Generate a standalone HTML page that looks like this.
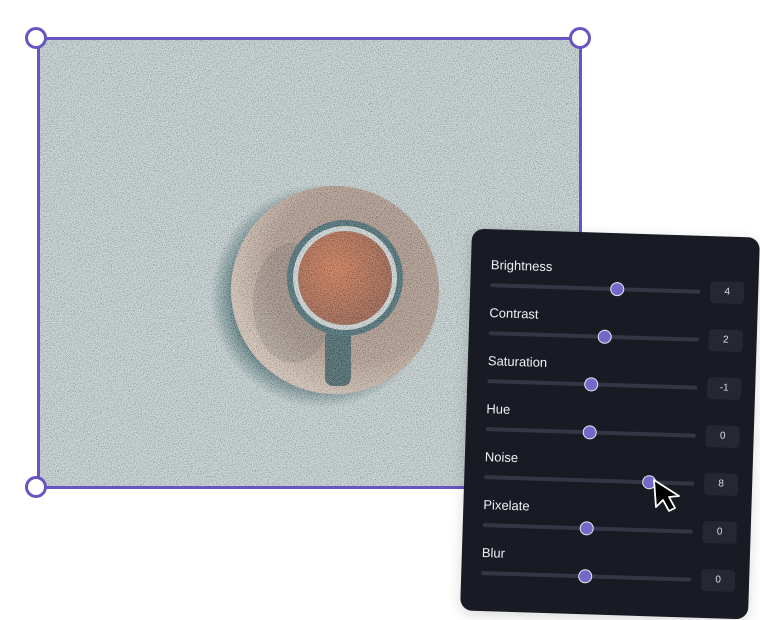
<!DOCTYPE html>
<html><head><meta charset="utf-8"><style>
*{margin:0;padding:0;box-sizing:border-box}
body{width:760px;height:620px;background:#fff;position:relative;overflow:hidden;font-family:"Liberation Sans",sans-serif}
.img{position:absolute;left:38px;top:38px;width:542px;height:449px;background:#bdcccc;overflow:hidden}
.frame{position:absolute;left:37px;top:37px;width:545px;height:452px;border:3px solid #6556c2}
.h{position:absolute;width:22px;height:22px;border-radius:50%;background:#fff;border:3px solid #6556c2}
.panel{position:absolute;left:466px;top:233px;width:288px;height:382px;background:#181b24;border-radius:12px;transform:rotate(1.8deg);box-shadow:0 4px 14px rgba(0,0,0,.15)}
.row{position:absolute;left:20px;width:252px;height:48px}
.lbl{position:absolute;left:0;top:0;color:#eef0f4;font-size:13px}
.trk{position:absolute;left:0;top:26px;width:210px;height:4px;border-radius:2px;background:#333745}
.knob{position:absolute;top:21px;width:14px;height:14px;border-radius:50%;background:#7468c8;border:1.5px solid #e8e8f4}
.val{position:absolute;left:220px;top:17px;width:34px;height:22px;border-radius:4px;background:#252833;color:#d8dae0;font-size:10px;text-align:center;line-height:22px}
</style></head><body>
<div class="img">
<svg width="542" height="449" style="position:absolute;left:0;top:0">
<defs>
<filter id="n" x="0" y="0" width="100%" height="100%"><feTurbulence type="fractalNoise" baseFrequency="1.3" numOctaves="1" seed="5"/><feColorMatrix type="matrix" values="3 0 0 0 -0.9  3 0 0 0 -0.9  3 0 0 0 -0.9  0 0 0 0 0.35"/></filter>
<radialGradient id="s" cx="0.62" cy="0.4" r="0.62"><stop offset="0" stop-color="#9a8070"/><stop offset="0.7" stop-color="#a68c7c"/><stop offset="1" stop-color="#d0bcac"/></radialGradient>
<radialGradient id="c" cx="0.4" cy="0.4" r="0.6"><stop offset="0" stop-color="#c8602e"/><stop offset="1" stop-color="#8a4028"/></radialGradient>
<radialGradient id="sh" cx="0.5" cy="0.5" r="0.5"><stop offset="0.8" stop-color="#1f4e56"/><stop offset="1" stop-color="#1f4e56" stop-opacity="0"/></radialGradient>
</defs>
<circle cx="284" cy="258" r="112" fill="url(#sh)" opacity="0.8"/>
<circle cx="297" cy="252" r="104" fill="url(#s)"/>
<ellipse cx="255" cy="265" rx="40" ry="60" fill="#4a4a4a" opacity="0.25"/>
<rect x="287" y="292" width="26" height="56" rx="8" fill="#23494f"/>
<circle cx="307" cy="240" r="58" fill="#24525a"/>
<circle cx="307" cy="240" r="52" fill="#c9d4d2"/>
<circle cx="307" cy="240" r="47" fill="url(#c)"/>
<rect width="542" height="449" filter="url(#n)"/>
</svg>
</div>
<div class="frame"></div>
<div class="h" style="left:25px;top:27px"></div>
<div class="h" style="left:569px;top:27px"></div>
<div class="h" style="left:25px;top:476px"></div>
<div class="panel">
<div class="row" style="top:28px"><div class="lbl">Brightness</div><div class="trk"></div><div class="knob" style="left:120px"></div><div class="val">4</div></div>
<div class="row" style="top:76px"><div class="lbl">Contrast</div><div class="trk"></div><div class="knob" style="left:109px"></div><div class="val">2</div></div>
<div class="row" style="top:124px"><div class="lbl">Saturation</div><div class="trk"></div><div class="knob" style="left:97px"></div><div class="val">-1</div></div>
<div class="row" style="top:172px"><div class="lbl">Hue</div><div class="trk"></div><div class="knob" style="left:97px"></div><div class="val">0</div></div>
<div class="row" style="top:220px"><div class="lbl">Noise</div><div class="trk"></div><div class="knob" style="left:158px"></div><div class="val">8</div></div>
<div class="row" style="top:268px"><div class="lbl">Pixelate</div><div class="trk"></div><div class="knob" style="left:97px"></div><div class="val">0</div></div>
<div class="row" style="top:316px"><div class="lbl">Blur</div><div class="trk"></div><div class="knob" style="left:97px"></div><div class="val">0</div></div>
</div>
<svg width="44" height="44" style="position:absolute;left:651px;top:478px">
<path d="M3 2 L5 29 L12 22 L18 33 L24 30 L18 19 L28 18 Z" fill="#000" stroke="#fff" stroke-width="1.8" stroke-linejoin="round"/>
</svg>
</body></html>
